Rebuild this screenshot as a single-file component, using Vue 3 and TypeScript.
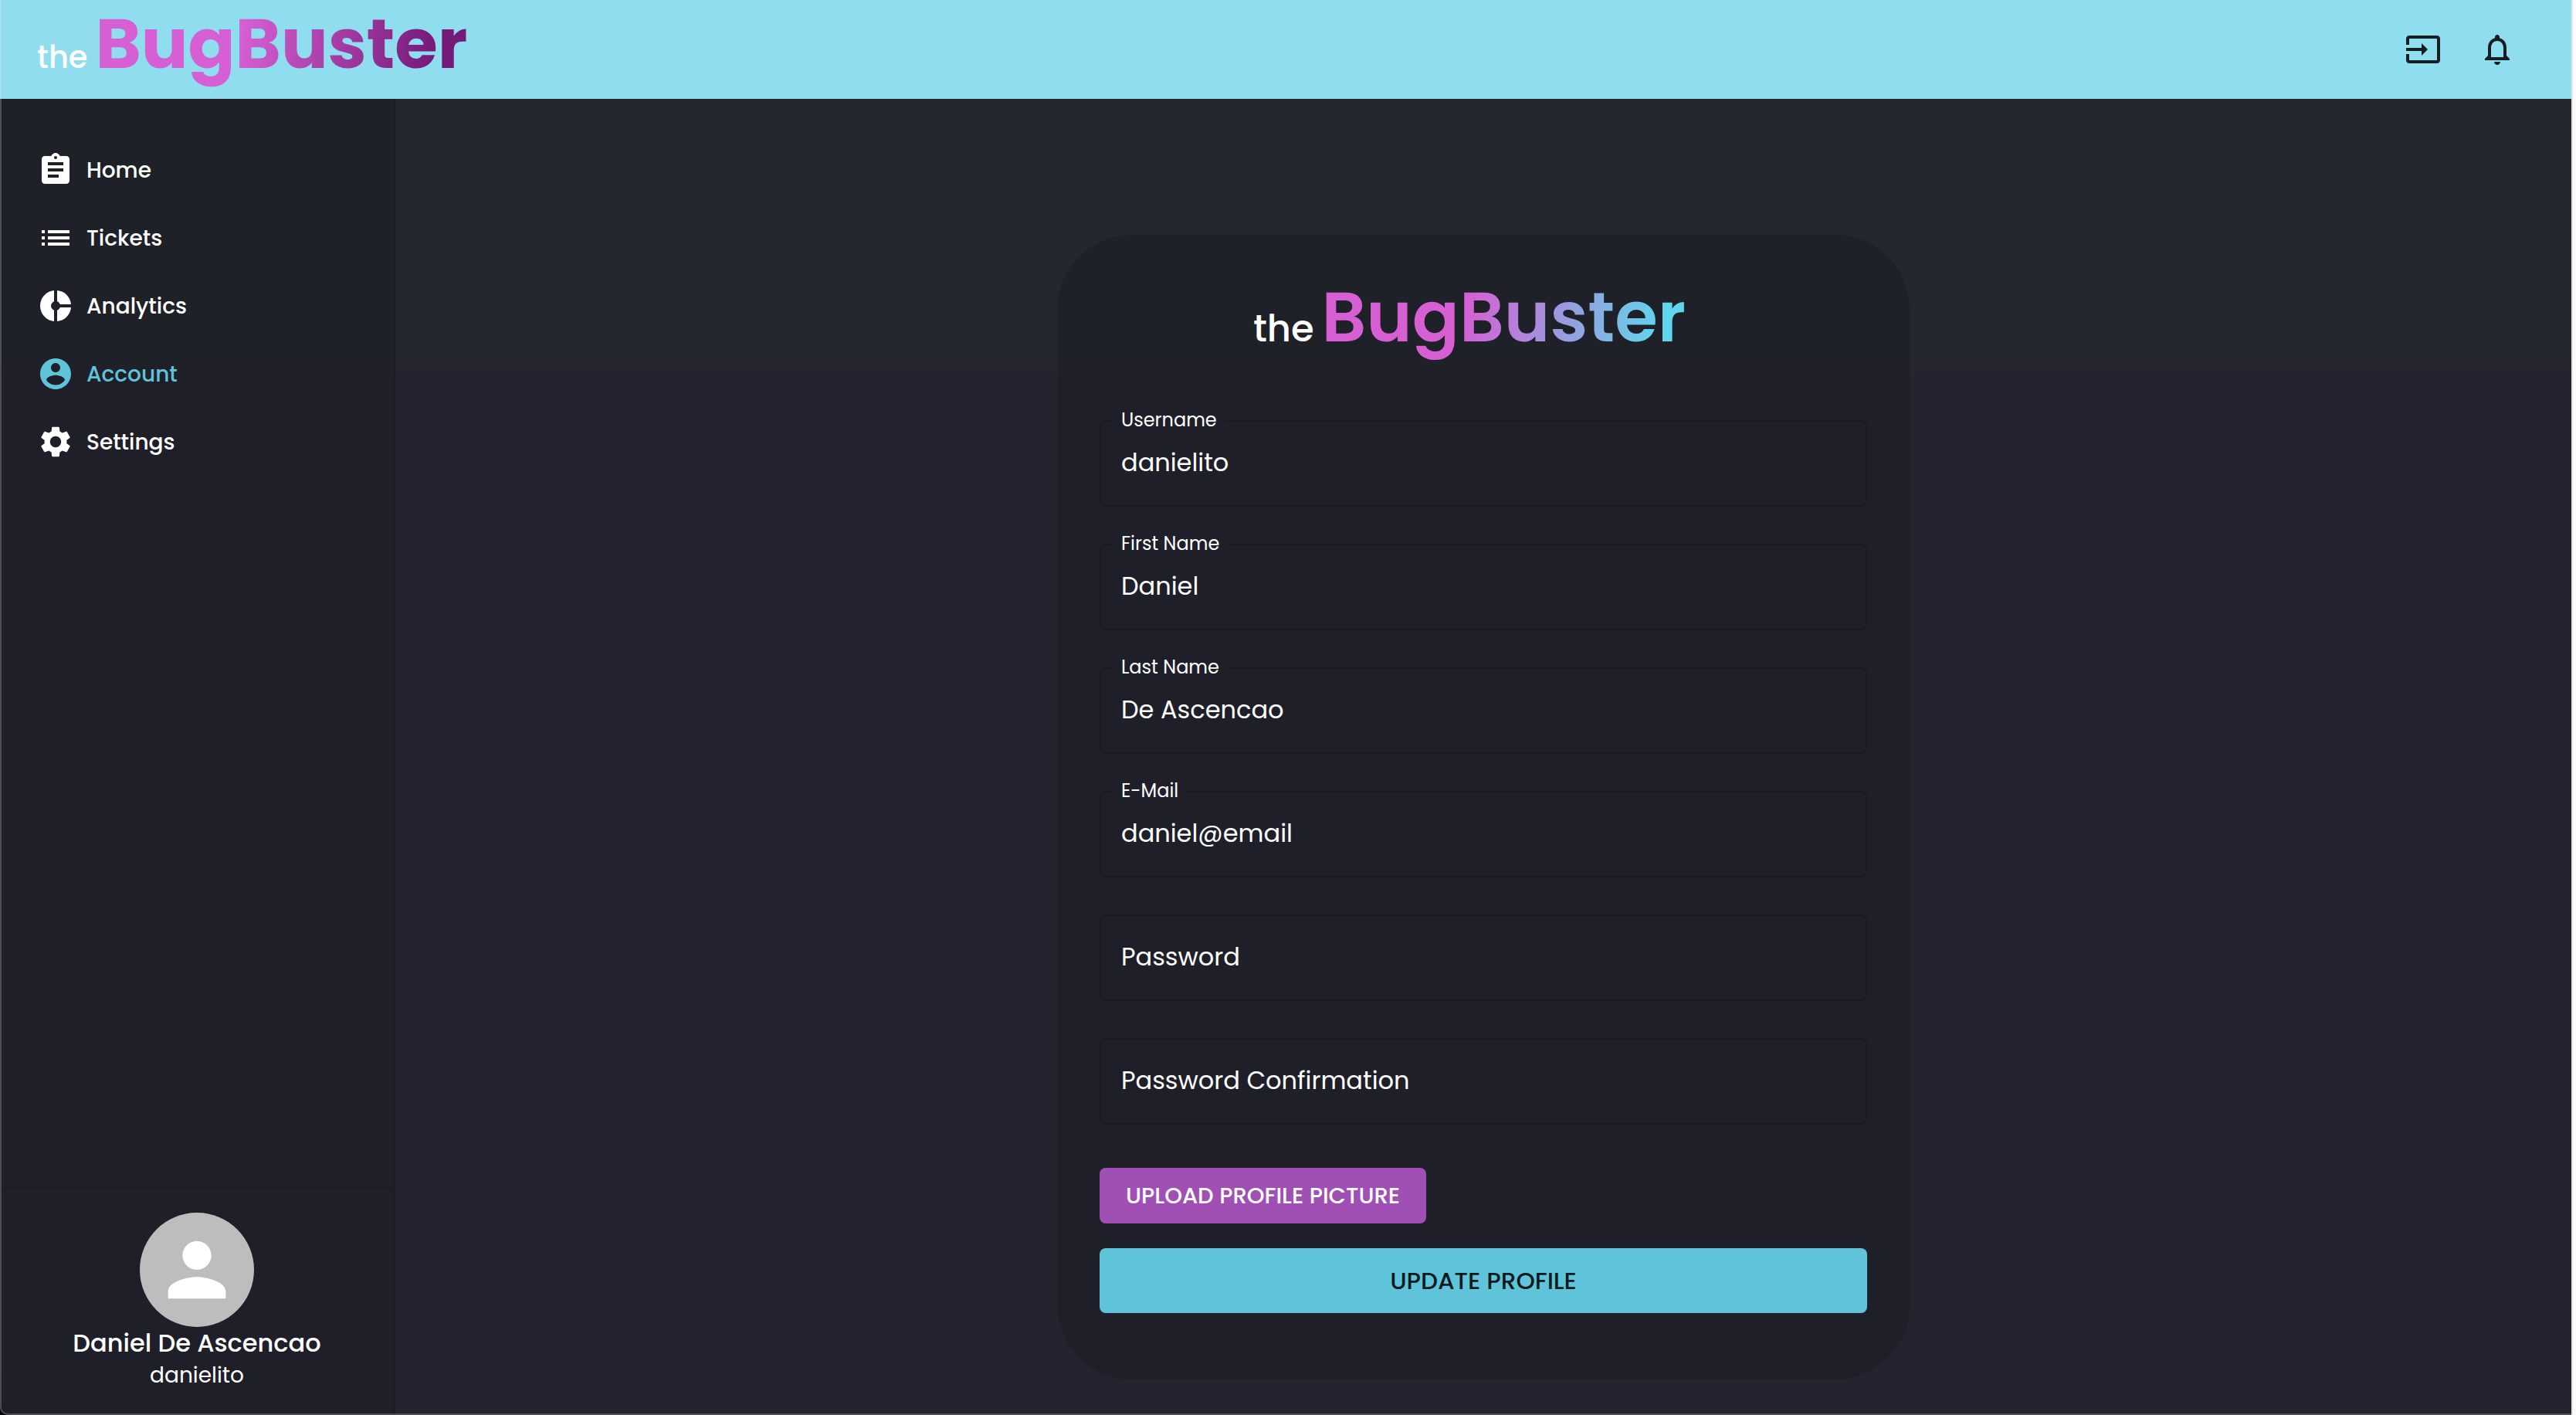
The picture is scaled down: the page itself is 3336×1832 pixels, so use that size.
<script setup lang="ts">
import { ref } from 'vue'

interface NavItem {
  label: string
  icon: string
}

interface Field {
  id: string
  label: string
  type: string
  value: string
}

const navItems: NavItem[] = [
  {
    label: 'Home',
    icon: 'M19 3h-4.18C14.4 1.84 13.3 1 12 1c-1.3 0-2.4.84-2.82 2H5c-1.1 0-2 .9-2 2v14c0 1.1.9 2 2 2h14c1.1 0 2-.9 2-2V5c0-1.1-.9-2-2-2zm-7 0c.55 0 1 .45 1 1s-.45 1-1 1-1-.45-1-1 .45-1 1-1zm2 14H7v-2h7v2zm3-4H7v-2h10v2zm0-4H7V7h10v2z',
  },
  {
    label: 'Tickets',
    icon: 'M3 13h2v-2H3v2zm0 4h2v-2H3v2zm0-8h2V7H3v2zm4 4h14v-2H7v2zm0 4h14v-2H7v2zM7 7v2h14V7H7z',
  },
  {
    label: 'Analytics',
    icon: 'M11 9.16V2c-5 .5-9 4.79-9 10s4 9.5 9 10v-7.16c-1-.41-2-1.52-2-2.84s1-2.43 2-2.84zM14.86 11H22c-.48-4.75-4-8.53-9-9v7.16c1 .3 1.52.98 1.86 1.84zM13 14.84V22c5-.47 8.52-4.25 9-9h-7.14c-.34.86-.86 1.54-1.86 1.84z',
  },
  {
    label: 'Account',
    icon: 'M12 2C6.48 2 2 6.48 2 12s4.48 10 10 10 10-4.48 10-10S17.52 2 12 2zm0 3c1.66 0 3 1.34 3 3s-1.34 3-3 3-3-1.34-3-3 1.34-3 3-3zm0 14.2c-2.5 0-4.71-1.28-6-3.22.03-1.99 4-3.08 6-3.08 1.99 0 5.97 1.09 6 3.08-1.29 1.94-3.5 3.22-6 3.22z',
  },
  {
    label: 'Settings',
    icon: 'M19.14 12.94c.04-.3.06-.61.06-.94 0-.32-.02-.64-.07-.94l2.03-1.58c.18-.14.23-.41.12-.61l-1.92-3.32c-.12-.22-.37-.29-.59-.22l-2.39.96c-.5-.38-1.03-.7-1.62-.94l-.36-2.54c-.04-.24-.24-.41-.48-.41h-3.84c-.24 0-.43.17-.47.41l-.36 2.54c-.59.24-1.13.57-1.62.94l-2.39-.96c-.22-.08-.47 0-.59.22L2.74 8.87c-.12.21-.08.47.12.61l2.03 1.58c-.05.3-.09.63-.09.94s.02.64.07.94l-2.03 1.58c-.18.14-.23.41-.12.61l1.92 3.32c.12.22.37.29.59.22l2.39-.96c.5.38 1.03.7 1.62.94l.36 2.54c.05.24.24.41.48.41h3.84c.24 0 .44-.17.47-.41l.36-2.54c.59-.24 1.13-.56 1.62-.94l2.39.96c.22.08.47 0 .59-.22l1.92-3.32c.12-.22.07-.47-.12-.61l-2.01-1.58zM12 15.6c-1.98 0-3.6-1.62-3.6-3.6s1.62-3.6 3.6-3.6 3.6 1.62 3.6 3.6-1.62 3.6-3.6 3.6z',
  },
]

const activeItem = ref('Account')

const fields = ref<Field[]>([
  { id: 'username', label: 'Username', type: 'text', value: 'danielito' },
  { id: 'first-name', label: 'First Name', type: 'text', value: 'Daniel' },
  { id: 'last-name', label: 'Last Name', type: 'text', value: 'De Ascencao' },
  { id: 'email', label: 'E-Mail', type: 'text', value: 'daniel@email' },
  { id: 'password', label: 'Password', type: 'password', value: '' },
  { id: 'password-confirmation', label: 'Password Confirmation', type: 'password', value: '' },
])
</script>

<template>
  <div class="frame">
    <div class="app">
      <header class="topbar">
        <div class="brand">
          <span class="brand-the">the</span>
          <span class="brand-name">BugBuster</span>
        </div>
        <div class="actions">
          <button class="icon-button" type="button" aria-label="Log out">
            <svg viewBox="0 0 24 24"><path d="M21 3.01H3c-1.1 0-2 .9-2 2V9h2V4.99h18v14.03H3V15H1v4.01c0 1.1.9 1.98 2 1.98h18c1.1 0 2-.88 2-1.98v-14c0-1.11-.9-2-2-2zM11 16l4-4-4-4v3H1v2h10v3z" /></svg>
          </button>
          <button class="icon-button" type="button" aria-label="Notifications">
            <svg viewBox="0 0 24 24"><path d="M12 22c1.1 0 2-.9 2-2h-4c0 1.1.9 2 2 2zm6-6v-5c0-3.07-1.63-5.64-4.5-6.32V4c0-.83-.67-1.5-1.5-1.5s-1.5.67-1.5 1.5v.68C7.64 5.36 6 7.92 6 11v5l-2 2v1h16v-1l-2-2zm-2 1H8v-6c0-2.48 1.51-4.5 4-4.5s4 2.02 4 4.5v6z" /></svg>
          </button>
        </div>
      </header>

      <div class="body">
        <aside class="sidebar">
          <nav class="nav">
            <a
              v-for="item in navItems"
              :key="item.label"
              href="#"
              class="nav-link"
              :class="{ active: item.label === activeItem }"
              @click.prevent="activeItem = item.label"
            >
              <svg viewBox="0 0 24 24"><path :d="item.icon" /></svg>
              <span class="nav-text">{{ item.label }}</span>
            </a>
          </nav>
          <div class="profile">
            <div class="avatar">
              <svg viewBox="0 0 24 24"><path d="M12 12c2.21 0 4-1.79 4-4s-1.79-4-4-4-4 1.79-4 4 1.79 4 4 4zm0 2c-2.67 0-8 1.34-8 4v2h16v-2c0-2.66-5.33-4-8-4z" /></svg>
            </div>
            <div class="profile-name">Daniel De Ascencao</div>
            <div class="profile-user">danielito</div>
          </div>
        </aside>

        <main class="main">
          <form class="card" @submit.prevent>
            <h1 class="brand card-brand">
              <span class="brand-the">the</span>
              <span class="brand-name">BugBuster</span>
            </h1>
            <div class="fields">
              <div
                v-for="field in fields"
                :key="field.id"
                class="field"
                :class="{ filled: field.value !== '' }"
              >
                <input :id="field.id" v-model="field.value" :type="field.type" autocomplete="off" />
                <label :for="field.id">{{ field.label }}</label>
              </div>
            </div>
            <button class="button upload" type="button">UPLOAD PROFILE PICTURE</button>
            <button class="button update" type="submit">UPDATE PROFILE</button>
          </form>
        </main>
      </div>
    </div>
  </div>
</template>

<style>
body {
  margin: 0;
  background: #000;
}
</style>

<style scoped>
.frame {
  box-sizing: border-box;
  min-height: 100vh;
  display: flex;
  border-right: 4px solid #fbfbfb;
  font-family: Poppins, Inter, 'Open Sans', sans-serif;
  color: #fff;
}

.app {
  position: relative;
  flex: 1;
  display: flex;
  flex-direction: column;
  border-right: 2px solid #e6e6e6;
  border-bottom-left-radius: 10px;
  background: linear-gradient(#24272f 460px, #242430 490px);
}

/* thin window outline along the left and bottom edges */
.app::after {
  content: '';
  position: absolute;
  inset: 0;
  border: 0 solid rgba(255, 255, 255, 0.2);
  border-left-width: 2px;
  border-bottom-width: 2px;
  border-bottom-left-radius: 10px;
  pointer-events: none;
}

.topbar {
  display: flex;
  align-items: center;
  justify-content: space-between;
  height: 128px;
  padding: 0 72px 0 48px;
  background: #8fddef;
}

.brand {
  display: flex;
  align-items: baseline;
  gap: 10px;
  margin: 0;
}

.brand-the {
  font-size: 40px;
  line-height: 60px;
  font-weight: 500;
}

.brand-name {
  font-size: 90px;
  line-height: 114px;
  font-weight: 700;
  color: transparent;
  background: linear-gradient(100deg, #d65fd3 39%, #751a78 90%);
  background-clip: text;
  -webkit-background-clip: text;
}

.topbar .brand {
  align-self: flex-start;
}

.actions {
  display: flex;
  gap: 48px;
}

.icon-button {
  padding: 0;
  border: 0;
  background: none;
  color: #151f22;
}

svg {
  display: block;
  width: 48px;
  height: 48px;
  fill: currentColor;
}

.body {
  flex: 1;
  display: flex;
}

.sidebar {
  box-sizing: border-box;
  width: 512px;
  display: flex;
  flex-direction: column;
  justify-content: space-between;
  border-right: 2px solid #1c1c25;
  background: rgba(0, 0, 0, 0.13);
  background-clip: padding-box;
}

.nav {
  display: flex;
  flex-direction: column;
  gap: 40px;
  padding: 68px 48px;
}

.nav-link {
  display: flex;
  align-items: center;
  gap: 16px;
  color: #fff;
  font-size: 28px;
  font-weight: 500;
  text-decoration: none;
}

.nav-link.active {
  color: #5fc4d9;
}

.nav-text {
  padding-top: 2px;
}

.profile {
  display: flex;
  flex-direction: column;
  align-items: center;
  padding: 32px 0 30px;
  border-top: 2px solid #1c1c25;
}

.avatar {
  display: flex;
  align-items: center;
  justify-content: center;
  width: 148px;
  height: 148px;
  border-radius: 50%;
  background: #bdbdbd;
}

.avatar svg {
  width: 112px;
  height: 112px;
}

.profile-name {
  font-size: 32px;
  line-height: 42px;
  font-weight: 500;
}

.profile-user {
  font-size: 28px;
  line-height: 42px;
}

.main {
  flex: 1;
  display: flex;
  justify-content: center;
  align-items: flex-start;
  padding: 176px 0 46px;
}

.card {
  box-sizing: border-box;
  width: 1104px;
  display: flex;
  flex-direction: column;
  padding: 44px 55px 86px;
  border-radius: 96px;
  background: rgba(0, 0, 0, 0.13);
}

.card-brand {
  justify-content: center;
  margin-bottom: 70px;
  padding-right: 36px;
}

.card-brand .brand-the {
  font-size: 48px;
}

.card-brand .brand-name {
  line-height: 126px;
  font-weight: 600;
  background-image: linear-gradient(100deg, #d65fd3 39%, #60d6ec 92%);
}

.fields {
  display: flex;
  flex-direction: column;
  gap: 48px;
}

.field {
  position: relative;
}

.field input {
  box-sizing: border-box;
  display: block;
  width: 100%;
  height: 112px;
  padding: 0 26px 2px;
  border: 2px solid #1a1a22;
  border-radius: 8px;
  outline: 0;
  background: none;
  color: #fff;
  font-family: inherit;
  font-size: 32px;
}

.field label {
  position: absolute;
  top: 35px;
  left: 18px;
  padding: 0 10px;
  font-size: 32px;
  line-height: 40px;
}

/* the label of a filled field sits in the outline */
.field.filled label {
  top: -18px;
  background: #1f1f2a;
  font-size: 24px;
  line-height: 36px;
}

.button {
  border: 0;
  border-radius: 8px;
  font-family: inherit;
  font-weight: 500;
}

.upload {
  align-self: flex-start;
  height: 72px;
  margin-top: 56px;
  padding: 0 34px;
  background: #a050b4;
  color: #fff;
  font-size: 29px;
}

.update {
  height: 84px;
  margin-top: 32px;
  background: #5fc4d9;
  color: #0e1a1d;
  font-size: 31px;
}
</style>
